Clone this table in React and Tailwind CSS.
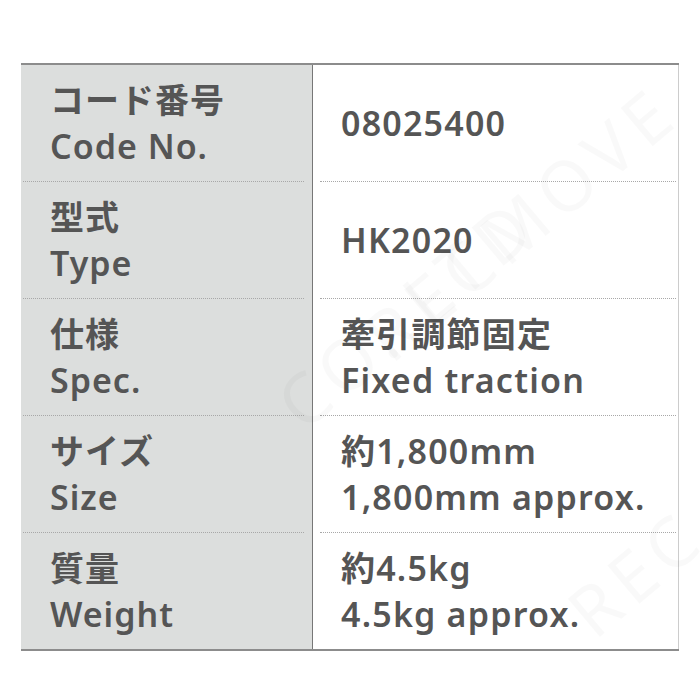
import React from 'react';

const ROWS = [
  { ja: 'コード番号', en: 'Code No.', value: ['08025400'] },
  { ja: '型式', en: 'Type', value: ['HK2020'] },
  { ja: '仕様', en: 'Spec.', value: ['牽引調節固定', 'Fixed traction'] },
  { ja: 'サイズ', en: 'Size', value: ['約1,800mm', '1,800mm approx.'] },
  { ja: '質量', en: 'Weight', value: ['約4.5kg', '4.5kg approx.'] },
];

const FONT = { fontFamily: '"Noto Sans", "Noto Sans CJK JP", sans-serif' };

// faint diagonal watermark, sits over the table
const MARKS = [
  { text: 'RECMOVE', cls: 'left-[330px] top-[170px]' },
  { text: 'CO.,LTD', cls: 'left-[250px] top-[260px]' },
  { text: 'REC', cls: 'left-[560px] top-[520px]' },
];

export default function App() {
  return (
    <div className="relative w-[700px] h-[700px] bg-white overflow-hidden text-[#555555]" style={FONT}>
      <div className="mx-[21px] mt-[63px] border-t-2 border-b-2 border-[#8c8c8c]">
        {ROWS.map((row, i) => (
          <div key={row.en} className="flex h-[117px] last:h-[116px]">
            <div className="w-[292px] flex flex-col bg-[#dcdedd] border-r border-[#777777]">
              <div className="flex-1 flex flex-col justify-center pl-[29px] text-[34px] leading-[46px] font-semibold tracking-[1px]">
                <span>{row.ja}</span>
                <span>{row.en}</span>
              </div>
              {i < ROWS.length - 1 && <div className="ml-[2px] mr-[8px] border-b border-dotted border-[#a8a8a8]" />}
            </div>
            <div className="flex-1 flex flex-col border-r border-[#cccccc]">
              <div className="flex-1 flex flex-col justify-center pl-[28px] text-[34px] leading-[46px] font-semibold tracking-[1.2px]">
                {row.value.map(v => (
                  <span key={v}>{v}</span>
                ))}
              </div>
              {i < ROWS.length - 1 && <div className="ml-[7px] mr-[2px] border-b border-dotted border-[#a8a8a8]" />}
            </div>
          </div>
        ))}
      </div>
      {MARKS.map((m, i) => (
        <div
          key={i}
          className={`absolute ${m.cls} -rotate-[40deg] text-[70px] tracking-[8px] text-[#000000]/[0.025] pointer-events-none whitespace-nowrap`}
        >
          {m.text}
        </div>
      ))}
    </div>
  );
}
